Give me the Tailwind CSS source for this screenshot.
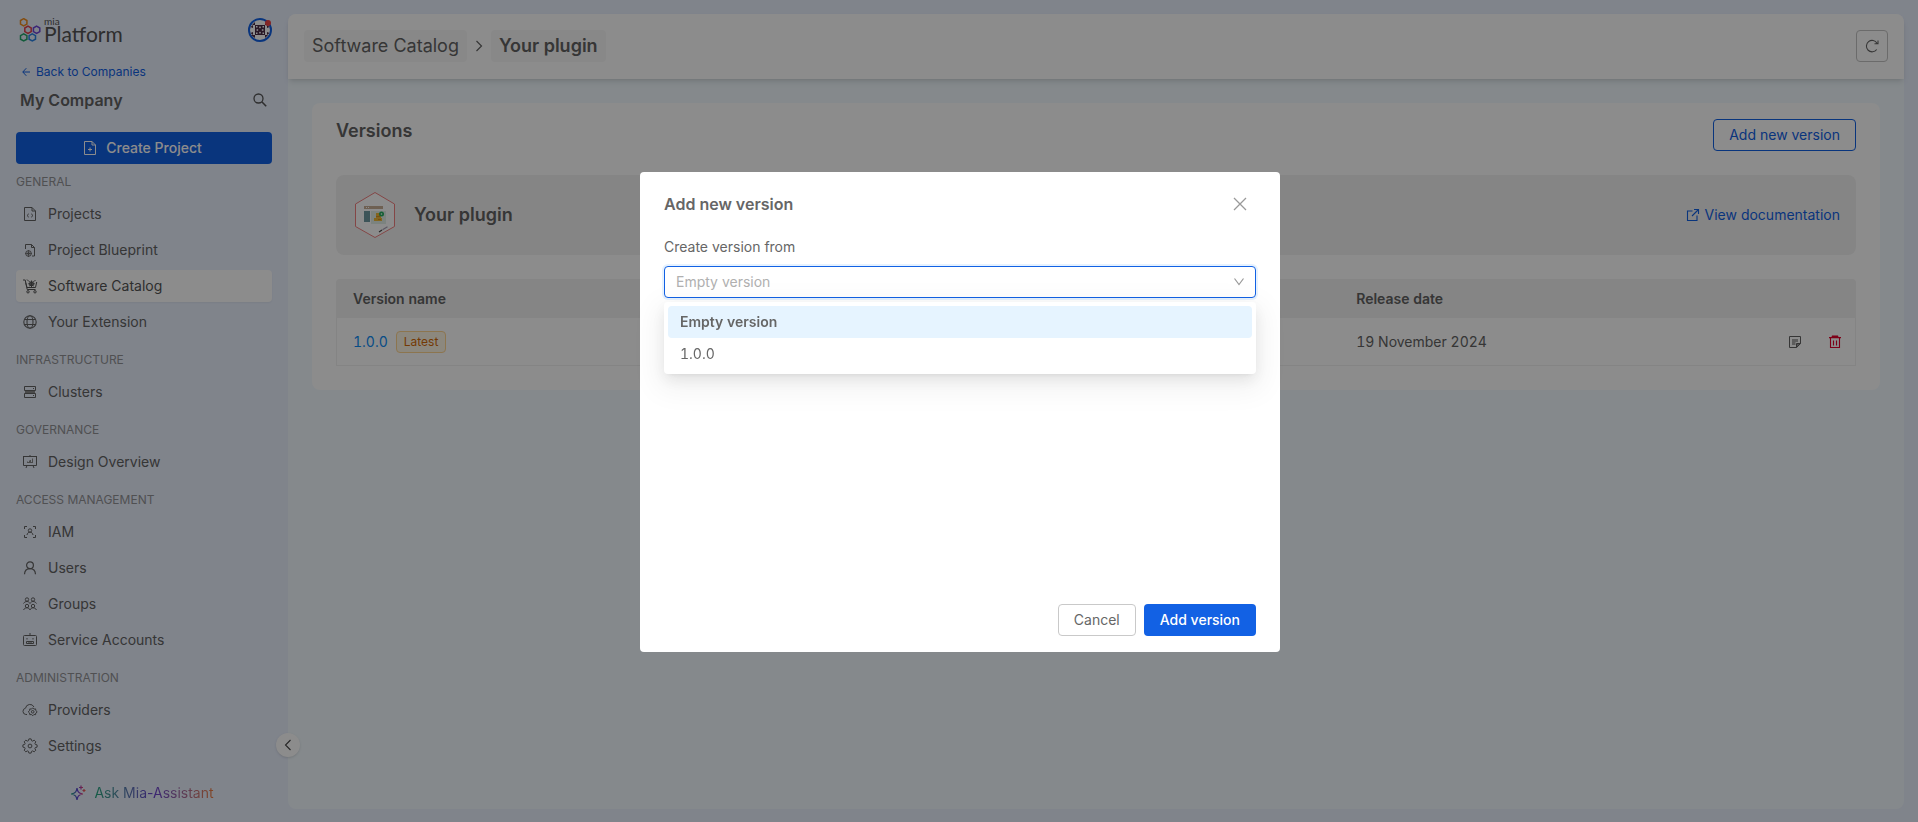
<!DOCTYPE html>
<html lang="en">
<head>
<meta charset="utf-8">
<title>Software Catalog - Your plugin</title>
<script src="https://cdn.jsdelivr.net/npm/@tailwindcss/browser@4"></script>
</head>
<body class="flex min-h-screen bg-[#e9f0fe] font-[Inter,sans-serif] text-sm text-[#636363]">

<aside class="flex w-72 shrink-0 flex-col px-4 pt-4.5">
  <header class="flex items-start justify-between">
    <a href="#" aria-label="mia Platform" class="flex gap-0.5 pl-[3px] font-[Lato,sans-serif] text-[#555]">
      <svg width="23" height="25" viewBox="0 0 23 25" fill="none" stroke-width="1.500" aria-hidden="true">
        <path stroke="#f08c1c" d="M4.700.7 7.900 2.500V6.100L4.700 7.900 1.500 6.100V2.500Z"/>
        <path stroke="#e0404c" d="M9 8.200 12.200 10V13.600L9 15.400 5.800 13.600V10Z"/>
        <path stroke="#6e44d8" d="M17.600 8.200 20.800 10V13.600L17.600 15.400 14.400 13.600V10Z"/>
        <path stroke="#22a66a" d="M4.700 15.800 7.900 17.600V21.200L4.700 23 1.500 21.200V17.600Z"/>
        <path stroke="#2b84e4" d="M13.300 15.800 16.500 17.600V21.200L13.300 23 10.100 21.200V17.600Z"/>
      </svg>
      <span class="flex flex-col">
        <span class="text-[10px] leading-[7px]">mia</span>
        <span class="text-[21px] leading-[18px]">Platform</span>
      </span>
    </a>
    <button aria-label="Account">
      <svg width="24" height="24" viewBox="0 0 24 24" aria-hidden="true">
        <circle cx="12" cy="12" r="11" fill="#fff" stroke="#1261e4" stroke-width="2"/>
        <g fill="#4a2a44">
          <path d="M7 7h10v10H7z"/>
          <path d="M4 7 7 4v3zM3 17h4v3zM20 17h-3v3zM17 4v3h3z"/>
          <path d="M2.500 9 5 7v3zM5 14v3l-2.500-2zM21.500 9 19 7v3zM19 14v3l2.500-2z"/>
        </g>
        <path fill="#fff" d="m12 8 1 1.500-1 1-1-1zM12 13.500l1 1-1 1.500-1-1.500zM8 12l1.500-1 1 1-1 1zM13.500 12l1-1 1.500 1-1.500 1zM8 8h1.500v1.500H8zM14.500 8H16v1.500h-1.500zM8 14.500h1.500V16H8zM14.500 14.500H16V16h-1.500z"/>
        <circle cx="20" cy="5" r="3" fill="#f04444"/>
      </svg>
    </button>
  </header>

  <a href="#" class="mt-[19px] flex items-center gap-1.5 pl-1.5 text-xs leading-5 text-[#1261e4]">
    <svg width="8" height="10" viewBox="0 0 8 10" fill="none" stroke="currentColor" aria-hidden="true"><path d="M8 5H.8M4.300 1.200.8 5l3.500 3.800"/></svg>
    Back to Companies
  </a>
  <div class="mt-1.5 flex h-6 items-center justify-between pr-1 pl-1">
    <h2 class="text-base font-semibold">My Company</h2>
    <button aria-label="Search">
      <svg width="16" height="16" viewBox="0 0 16 16" fill="none" stroke="#555" stroke-width="1.300" aria-hidden="true"><circle cx="6.500" cy="6.500" r="4.500"/><path stroke-width="1.600" d="m9.800 9.800 4.400 4.400"/></svg>
    </button>
  </div>

  <button class="mt-5 flex h-8 items-center justify-center gap-2 rounded bg-[#1261e4] pr-1 font-medium text-white">
    <svg width="16" height="16" viewBox="0 0 16 16" fill="none" stroke="currentColor" aria-hidden="true"><path d="M2.500 1.500h7.500l3.500 3.500v9.500h-11zM10 1.500V5h3.500M8 7.500v4M6 9.500h4"/></svg>
    Create Project
  </button>

  <nav aria-label="Main">
    <h3 class="flex h-[34px] items-center pt-0.5 text-xs text-[#929395]">GENERAL</h3>
    <ul>
      <li class="mb-1"><a href="#" class="flex h-8 items-center gap-2.5 rounded px-1.5">
        <svg width="16" height="16" viewBox="0 0 16 16" fill="none" stroke="currentColor" aria-hidden="true"><path d="M2.500 1.500h7.500l3.500 3.500v9.500h-11zM10 1.500V5h3.500M6.800 7.800 5 9.500l1.800 1.700M9.200 7.800 11 9.500l-1.800 1.700"/></svg>
        Projects</a></li>
      <li class="mb-1"><a href="#" class="flex h-8 items-center gap-2.5 rounded px-1.5">
        <svg width="16" height="16" viewBox="0 0 16 16" fill="none" stroke="currentColor" aria-hidden="true"><path d="M3.500 7V2.500H9.500l3 3v8.500h-2.500M9.500 2.500v3h3"/><circle cx="6.500" cy="11.500" r="2.800"/><circle cx="6.500" cy="11.500" r="1"/><path d="M6.500 8v7M3 11.500h7" stroke-width=".7"/></svg>
        Project Blueprint</a></li>
      <li class="mb-1"><a href="#" aria-current="page" class="flex h-8 items-center gap-2.5 rounded bg-white px-1.5 text-[#555] shadow-xs">
        <svg width="16" height="16" viewBox="0 0 16 16" fill="none" stroke="currentColor" aria-hidden="true"><path d="M1 2h2.200l2 9.500h8.300M3.600 4.500 5 9.500h8.500l1.200-5.500"/><circle cx="6" cy="13.800" r="1.200"/><circle cx="13" cy="13.800" r="1.200"/><circle cx="9.500" cy="5.800" r="2"/><path d="M9.500 2.500v6.600M6.200 5.800h6.600M7.200 3.500l4.600 4.600M11.800 3.500 7.200 8.100M5 1.500l2 2M13.500 2l-1.500 1.500"/></svg>
        Software Catalog</a></li>
      <li class="mb-1"><a href="#" class="flex h-8 items-center gap-2.5 rounded px-1.5">
        <svg width="16" height="16" viewBox="0 0 16 16" fill="none" stroke="currentColor" stroke-width="1.100" aria-hidden="true"><circle cx="8" cy="8" r="6.200"/><ellipse cx="8" cy="8" rx="3" ry="6.200"/><path d="M2.600 5.500h10.800M2.600 10.500h10.800"/></svg>
        Your Extension</a></li>
    </ul>
    <h3 class="flex h-[34px] items-center pt-0.5 text-xs text-[#929395]">INFRASTRUCTURE</h3>
    <ul>
      <li class="mb-1"><a href="#" class="flex h-8 items-center gap-2.5 rounded px-1.5">
        <svg width="16" height="16" viewBox="0 0 16 16" fill="none" stroke="currentColor" aria-hidden="true"><path fill="#888" stroke="none" d="M3 7h10v2H3z"/><path d="M2.500 2.500h11v4h-11zM2.500 9.500h11v4h-11zM11.500 4v1M11.500 11v1"/></svg>
        Clusters</a></li>
    </ul>
    <h3 class="flex h-[34px] items-center pt-0.5 text-xs text-[#929395]">GOVERNANCE</h3>
    <ul>
      <li class="mb-1"><a href="#" class="flex h-8 items-center gap-2.5 rounded px-1.5">
        <svg width="16" height="16" viewBox="0 0 16 16" fill="none" stroke="currentColor" aria-hidden="true"><path d="M1 2.500h14M1.500 2.500v9h13v-9M8 1v1.500M5 11.500 4 14M11 11.500l1 2.500"/><path stroke="#888" d="M5.500 9V7.500M7.500 9V6.500M8.500 9V6M10.500 9V4.500M5 8.500h6"/></svg>
        Design Overview</a></li>
    </ul>
    <h3 class="flex h-[34px] items-center pt-0.5 text-xs text-[#929395]">ACCESS MANAGEMENT</h3>
    <ul>
      <li class="mb-1"><a href="#" class="flex h-8 items-center gap-2.5 rounded px-1.5">
        <svg width="16" height="16" viewBox="0 0 16 16" fill="none" stroke="currentColor" aria-hidden="true"><path d="M5 2.500H2.500V5M11 2.500h2.500V5M5 13.500H2.500V11M11 13.500h2.500V11"/><circle cx="8" cy="6.500" r="1.700"/><path d="M5 11c.3-2 1.500-2.800 3-2.800s2.700.8 3 2.800"/></svg>
        IAM</a></li>
      <li class="mb-1"><a href="#" class="flex h-8 items-center gap-2.5 rounded px-1.5">
        <svg width="16" height="16" viewBox="0 0 16 16" fill="none" stroke="currentColor" stroke-width="1.200" aria-hidden="true"><circle cx="8" cy="5.300" r="3.400"/><path d="M2.500 14.200c.2-3.500 2.500-5.500 5.500-5.500s5.300 2 5.500 5.500"/></svg>
        Users</a></li>
      <li class="mb-1"><a href="#" class="flex h-8 items-center gap-2.5 rounded px-1.5">
        <svg width="16" height="16" viewBox="0 0 16 16" fill="none" stroke="currentColor" aria-hidden="true"><circle cx="5" cy="3.500" r="1.700"/><circle cx="11" cy="3.500" r="1.700"/><circle cx="5" cy="10" r="1.700"/><circle cx="11" cy="10" r="1.700"/><path d="M1.500 7.500C2.500 6 3.500 5.500 5 5.500S7 6 8 7.500c1-1.500 1.500-2 3-2s2.500.5 3.500 2M1.500 14c.8-1.500 1.800-2.200 3.500-2.200S7.200 12.500 8 14c.8-1.500 1.300-2.200 3-2.200s2.700.7 3.500 2.200"/></svg>
        Groups</a></li>
      <li class="mb-1"><a href="#" class="flex h-8 items-center gap-2.5 rounded px-1.5">
        <svg width="16" height="16" viewBox="0 0 16 16" fill="none" stroke="currentColor" aria-hidden="true"><rect x="1.500" y="3.500" width="13" height="10" rx="1"/><path d="M8 1v2.500M5 6v1.500M11 6v1.500M4.500 9.500h7v2h-7zM7 9.500v2M9 9.500v2"/></svg>
        Service Accounts</a></li>
    </ul>
    <h3 class="flex h-[34px] items-center pt-0.5 text-xs text-[#929395]">ADMINISTRATION</h3>
    <ul>
      <li class="mb-1"><a href="#" class="flex h-8 items-center gap-2.5 rounded px-1.5">
        <svg width="16" height="16" viewBox="0 0 16 16" fill="none" stroke="currentColor" aria-hidden="true"><path d="M5 12.500H3.800A3.200 3.200 0 0 1 3.500 6.200 4.500 4.500 0 0 1 12 5"/><circle cx="10.700" cy="9.800" r="1.300"/><path d="m10.700 5.800 1.200 1.300 1.700-.2.200 1.700 1.400 1.200-1.400 1.200-.2 1.700-1.700-.2-1.200 1.300-1.200-1.300-1.700.2-.2-1.700-1.400-1.200 1.400-1.200.2-1.700 1.700.2z"/></svg>
        Providers</a></li>
      <li class="mb-1"><a href="#" class="flex h-8 items-center gap-2.5 rounded px-1.5">
        <svg width="16" height="16" viewBox="0 0 16 16" fill="none" stroke="currentColor" stroke-linejoin="round" aria-hidden="true"><circle cx="8" cy="8" r="1.900"/><path d="M6.900.9h2.200l.5 1.800 1 .4 1.600-.9 1.600 1.600-.9 1.600.4 1 1.800.5v2.200l-1.800.5-.4 1 .9 1.600-1.600 1.600-1.600-.9-1 .4-.5 1.800H6.900l-.5-1.800-1-.4-1.600.9-1.600-1.600.9-1.600-.4-1L.9 9.100V6.900l1.800-.5.4-1-.9-1.600 1.600-1.600 1.600.9 1-.4z"/></svg>
        Settings</a></li>
    </ul>
  </nav>

  <button class="mt-[11px] flex h-8 items-center justify-center gap-2 pr-1">
    <svg width="16" height="16" viewBox="0 0 16 16" fill="none" aria-hidden="true">
      <defs><linearGradient id="spark" x1="0" x2="1"><stop stop-color="#1ea97c"/><stop offset=".45" stop-color="#5b3fd8"/><stop offset=".75" stop-color="#d0408c"/><stop offset="1" stop-color="#f0703c"/></linearGradient></defs>
      <path stroke="url(#spark)" stroke-width="1.200" d="M7 3C7.600 7 8.500 8 12.800 9 8.500 10 7.600 11 7 15 6.400 11 5.500 10 1.200 9 5.500 8 6.400 7 7 3ZM11 .5v4M9 2.500h4M14 4v3M12.500 5.500h3"/>
    </svg>
    <span class="bg-linear-to-r from-[#1ea97c] via-[#6b3fd0] to-[#f0803c] bg-clip-text text-transparent">Ask Mia-Assistant</span>
  </button>
</aside>

<main class="relative mt-3.5 mr-3.5 mb-[13px] min-w-0 flex-1 rounded-lg bg-[#f2faff]">
  <header class="flex h-[65px] items-center justify-between rounded-t-lg bg-white px-4 pb-px shadow-md">
    <nav aria-label="Breadcrumb" class="flex items-center gap-2 text-lg">
      <a href="#" class="flex h-8 items-center rounded bg-[#f8f8f8] px-2">Software Catalog</a>
      <svg width="8" height="12" viewBox="0 0 8 12" fill="none" stroke="currentColor" stroke-width="1.200" aria-hidden="true"><path d="m1.500 1 5 5-5 5"/></svg>
      <span aria-current="page" class="flex h-8 items-center rounded bg-[#f8f8f8] px-2 font-semibold">Your plugin</span>
    </nav>
    <button aria-label="Refresh" class="flex size-8 items-center justify-center rounded border border-[#c4c4c4]">
      <svg width="16" height="16" viewBox="0 0 16 16" fill="none" stroke="currentColor" stroke-width="1.100" aria-hidden="true"><path d="M12.700 11.500A5.700 5.700 0 1 1 13 5.200M14 2.500v3.200h-3.500"/></svg>
    </button>
  </header>

  <section class="m-6 rounded-lg bg-white px-6 pt-4 pb-6">
    <div class="flex items-start justify-between">
      <h1 class="text-lg leading-6 font-semibold">Versions</h1>
      <button class="h-8 rounded border border-[#1261e4] px-[15px] text-[#1261e4]">Add new version</button>
    </div>

    <div class="mt-6 flex h-20 items-center justify-between rounded-lg bg-[#f3f3f3] px-4">
      <div class="flex items-center gap-4.5 pl-0.5">
        <svg width="42" height="48" viewBox="0 0 42 48" aria-hidden="true">
          <path d="M21 1.500 40.500 13v22.500L21 46.500 1.500 35.500V13Z" fill="#fff" stroke="#f08080"/>
          <path fill="#c9b095" d="M10 15h19v3H10z"/><path fill="#fff" d="M12 16h1v1h-1zM14 16h1v1h-1z"/>
          <path fill="#6f99a1" d="M10 20h6v11h-6z"/><path fill="#e2eee8" d="M17 20h15v13H17z"/>
          <path fill="#eeb838" d="M22 22h5v5h1v3h-8v-3h2z"/><path fill="#d99020" d="M22 25h4v1h-4zM24 28h3v1h-3z"/>
          <circle cx="27.500" cy="23" r="2.500" fill="#27ae60"/><circle cx="27.500" cy="23" r=".8" fill="#fff"/>
          <path stroke="#444" stroke-width="1.200" d="m25 41 3-2"/><path stroke="#a9a0b5" stroke-width="1.200" d="m28.500 38.700 5-3"/>
        </svg>
        <h2 class="text-lg font-semibold">Your plugin</h2>
      </div>
      <a href="#" class="flex items-center gap-1 text-[#1261e4]">
        <svg width="16" height="16" viewBox="0 0 16 16" fill="none" stroke="currentColor" stroke-width="1.100" aria-hidden="true"><path d="M7.500 4H2.500v9.500H12V8.500M9 2.500h4.500V7M13.500 2.500 7 9"/></svg>
        View documentation
      </a>
    </div>

    <table class="mt-6 w-full table-fixed border-separate border-spacing-0 text-left tabular-nums">
      <colgroup><col class="w-[66%]"><col><col class="w-10"><col class="w-10"></colgroup>
      <thead>
        <tr class="h-[39px]">
          <th scope="col" class="rounded-tl bg-[#f2f2f2] px-[17px] font-semibold">Version name</th>
          <th scope="col" class="bg-[#f2f2f2] px-[17px] font-semibold">Release date</th>
          <td class="bg-[#f2f2f2]"></td>
          <td class="rounded-tr bg-[#f2f2f2]"></td>
        </tr>
      </thead>
      <tbody>
        <tr class="h-12">
          <td class="border-b border-l border-[#f0f0f0] px-4">
            <div class="flex items-center gap-2">
              <a href="#" class="text-[#0f8cf5]">1.0.0</a>
              <span class="rounded border border-[#ffd591] bg-[#fff7e6] px-[7px] text-xs leading-5 text-[#d46b08]">Latest</span>
            </div>
          </td>
          <td class="border-b border-[#f0f0f0] px-[17px]">19 November 2024</td>
          <td class="border-b border-[#f0f0f0] px-[11px]">
            <button aria-label="Release note" class="block">
              <svg width="16" height="16" viewBox="0 0 16 16" fill="none" stroke="currentColor" aria-hidden="true"><path fill="#aaa" stroke="none" d="M5 5h6v3H8.500v3H5z"/><path fill="#999" stroke="none" d="M9.500 14V9.500H14z"/><path d="M13.500 9.500v-7h-11v11h7zM9.500 13.500v-4h4"/></svg>
            </button>
          </td>
          <td class="border-r border-b border-[#f0f0f0] px-[11px]">
            <button aria-label="Delete version" class="block text-[#e4002b]">
              <svg width="16" height="16" viewBox="0 0 16 16" fill="none" stroke="currentColor" stroke-width="1.100" aria-hidden="true"><path fill="currentColor" stroke="none" d="M5 1.500h6L11.500 3H14v1.200H2V3h2.500z"/><path d="M3.500 3.500v10h9v-10M6.500 6.500v5M9.500 6.500v5"/></svg>
            </button>
          </td>
        </tr>
      </tbody>
    </table>
  </section>

  <button aria-label="Collapse sidebar" class="absolute bottom-13 -left-3 flex size-6 items-center justify-center rounded-full bg-white shadow">
    <svg width="8" height="12" viewBox="0 0 8 12" fill="none" stroke="#444" stroke-width="1.100" aria-hidden="true"><path d="M6.500 1 1.500 6l5 5"/></svg>
  </button>
</main>

<div class="fixed inset-0 flex items-start justify-center bg-black/45 pt-43 pl-0.5">
  <div role="dialog" aria-modal="true" aria-labelledby="dialog-title" class="flex min-h-120 w-160 flex-col rounded bg-white px-6 pt-5 pb-4 text-[#666]">
    <div class="flex h-6 items-center justify-between pr-2">
      <h2 id="dialog-title" class="text-base font-semibold">Add new version</h2>
      <button aria-label="Close">
        <svg width="16" height="16" viewBox="0 0 16 16" fill="none" stroke="#999" stroke-width="1.300" aria-hidden="true"><path d="m2 2 12 12M14 2 2 14"/></svg>
      </button>
    </div>
    <label for="version-source" class="mt-5 leading-[22px]">Create version from</label>
    <div class="relative mt-2">
      <select id="version-source" class="block h-8 w-full appearance-none rounded border border-[#1261e4] bg-white px-[11px] text-[#b0b0b0] ring-2 ring-[#e6f2ff] outline-none">
        <option>Empty version</option>
        <option>1.0.0</option>
      </select>
      <svg class="pointer-events-none absolute top-2.5 right-[11px]" width="12" height="12" viewBox="0 0 12 12" fill="none" stroke="#999" stroke-width="1.200" aria-hidden="true"><path d="m1.500 2.500 4.500 6 4.500-6"/></svg>
      <ul role="listbox" aria-label="Create version from" class="absolute inset-x-0 top-9 rounded bg-white p-1 tabular-nums shadow-[0_6px_16px_0_rgba(0,0,0,0.08),0_3px_6px_-4px_rgba(0,0,0,0.12),0_9px_28px_8px_rgba(0,0,0,0.05)]">
        <li role="option" aria-selected="true" class="flex h-8 items-center rounded bg-[#e6f4ff] px-3 font-semibold">Empty version</li>
        <li role="option" aria-selected="false" class="flex h-8 items-center rounded px-3">1.0.0</li>
      </ul>
    </div>
    <footer class="mt-auto flex justify-end gap-2">
      <button class="h-8 rounded border border-[#c9c9c9] px-[15px]">Cancel</button>
      <button class="h-8 rounded bg-[#1261e4] px-4 font-medium text-white">Add version</button>
    </footer>
  </div>
</div>
</body>
</html>
